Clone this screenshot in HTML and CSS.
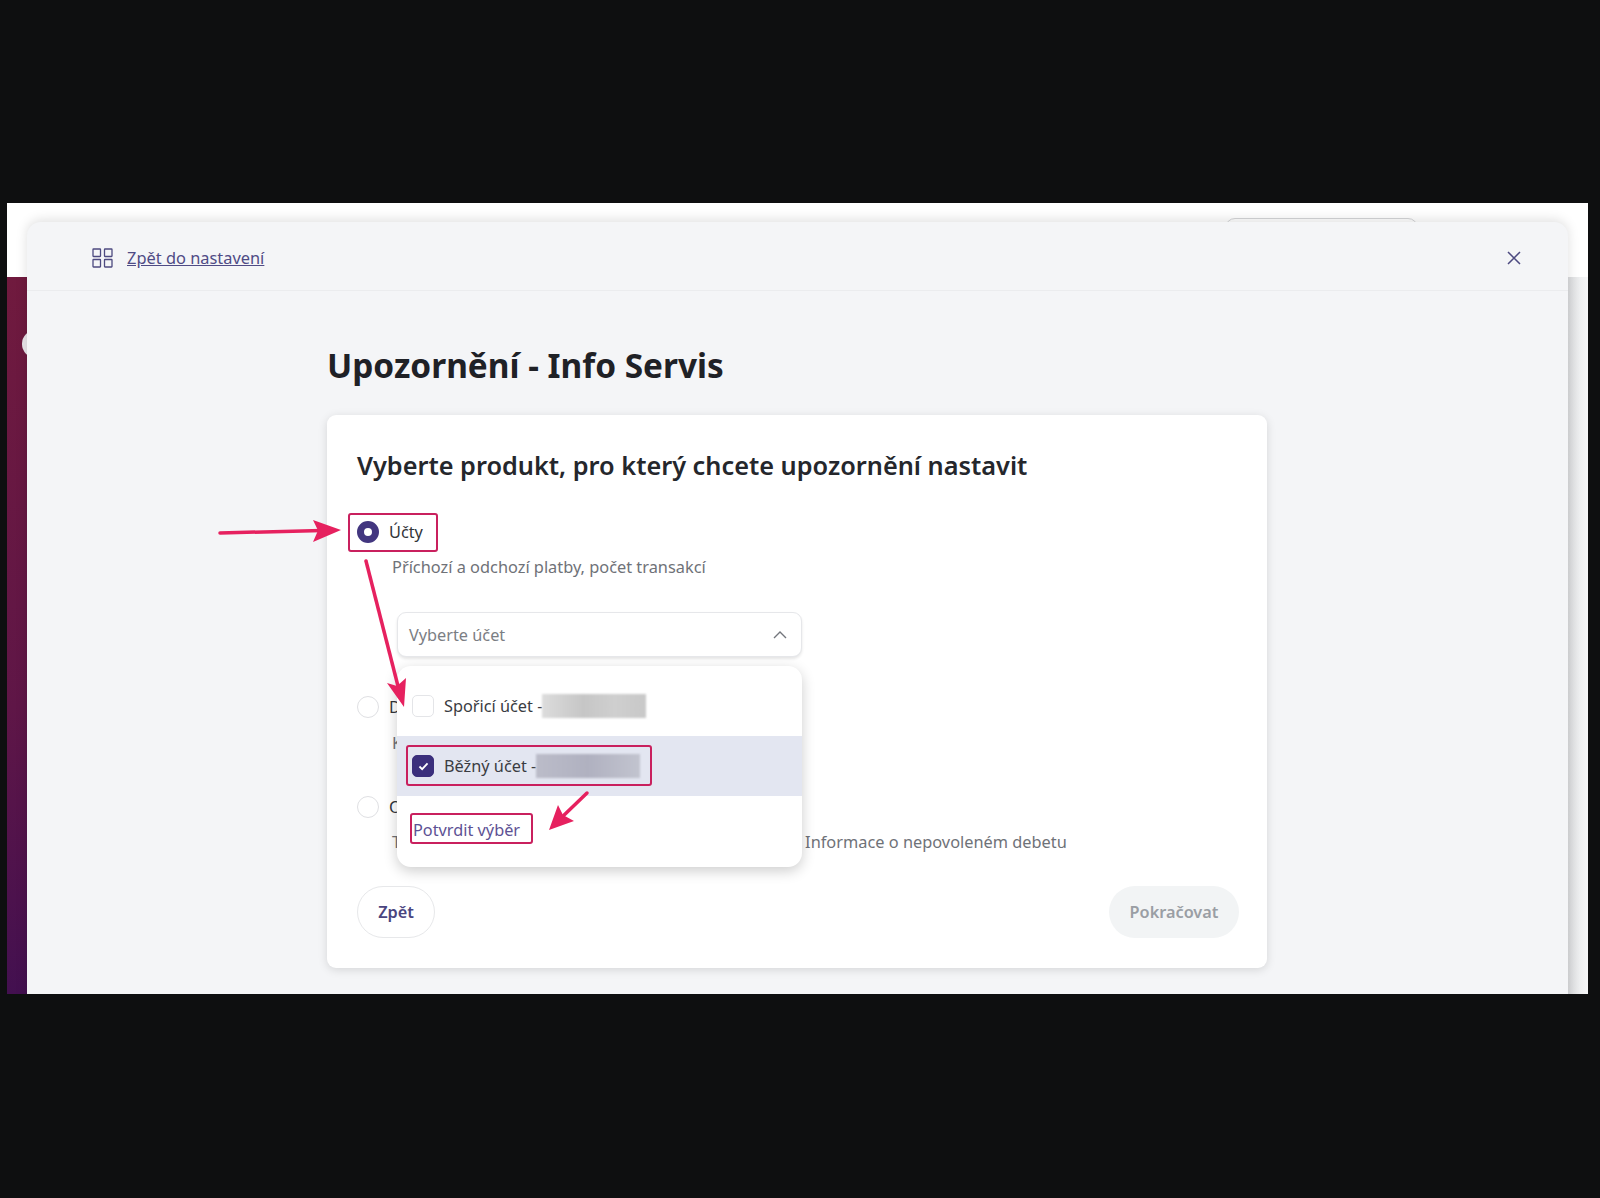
FILE: index.html
```html
<!DOCTYPE html>
<html lang="cs">
<head>
<meta charset="utf-8">
<title>Upozornění - Info Servis</title>
<link rel="stylesheet" href="styles.css">
</head>
<body>
<div class="frame">
  <div class="backdrop">
    <div class="band"></div>
    <div class="strip-left"></div>
    <div class="strip-mid"></div>
    <div class="strip-right"></div>
  </div>
  <div class="back-pill"></div>
  <div class="back-dot"></div>
  <section class="modal">
    <header class="modal-head">
      <svg class="grid-icon" viewBox="0 0 21 20" fill="none" stroke="#4d4a80" stroke-width="1.3">
        <rect x="1" y="1" width="7.5" height="7.5" rx=".5"/><rect x="12.5" y="1" width="7.5" height="7.5" rx=".5"/>
        <rect x="1" y="11.5" width="7.5" height="7.5" rx=".5"/><rect x="12.5" y="11.5" width="7.5" height="7.5" rx=".5"/>
      </svg>
      <a class="back-link" href="#">Zpět do nastavení</a>
      <svg class="close-icon" viewBox="0 0 14 14" fill="none" stroke="#4d4a80" stroke-width="1.5"><path d="M1 1l12 12M13 1L1 13"/></svg>
    </header>
    <main class="modal-body">
      <h1 class="title">Upozornění - Info Servis</h1>
      <div class="card">
        <h2 class="card-title">Vyberte produkt, pro který chcete upozornění nastavit</h2>
        <div class="option option-first"><span class="radio radio-on"></span><span class="opt-label">Účty</span></div>
        <p class="sub">Příchozí a odchozí platby, počet transakcí</p>
        <div class="select">
          <span class="placeholder">Vyberte účet</span>
          <svg class="chevron" viewBox="0 0 14 8" fill="none" stroke="#73767c" stroke-width="1.4"><path d="M1 7l6-6 6 6"/></svg>
          <div class="dropdown">
            <div class="row row-first"><span class="check"></span><span class="row-text">Spořicí účet -</span><span class="mask mask-grey"></span></div>
            <div class="row row-active"><span class="check check-on"><svg viewBox="0 0 12 10" fill="none" stroke="#fff" stroke-width="2"><path d="M1.5 5l3 3 6-6.5"/></svg></span><span class="row-text">Běžný účet -</span><span class="mask mask-blue"></span></div>
            <div class="confirm"><a class="confirm-link" href="#">Potvrdit výběr</a></div>
          </div>
        </div>
        <div class="option option-second"><span class="radio"></span><span class="opt-label">D</span></div>
        <p class="sub sub-second">K</p>
        <div class="option option-third"><span class="radio"></span><span class="opt-label">O</span></div>
        <p class="sub">T<span class="sub-tail">Informace o nepovoleném debetu</span></p>
        <div class="actions">
          <button class="btn btn-back">Zpět</button>
          <button class="btn btn-next">Pokračovat</button>
        </div>
      </div>
    </main>
  </section>
</div>
<svg class="notes" viewBox="0 0 1600 1198" fill="none">
  <g stroke="#c9205e" stroke-width="2">
    <rect x="349" y="514" width="88" height="37" rx="2"/>
    <rect x="407" y="746" width="244" height="39" rx="2"/>
    <rect x="411" y="814" width="121" height="29" rx="2"/>
  </g>
  <g stroke="#e6215f" stroke-width="3.5" stroke-linecap="round">
    <path d="M220 533L322 530.5"/>
    <path d="M366 561L399 690"/>
    <path d="M587 793L560 819"/>
  </g>
  <g fill="#e6215f">
    <path d="M341 530L313 520L318 530.5L313 542Z"/>
    <path d="M404 707L387 683L397 686L406 678Z"/>
    <path d="M549 830L558 805L563 815L574 821Z"/>
  </g>
</svg>
</body>
</html>
```
FILE: styles.css
```css
* { box-sizing: border-box; }
html, body { margin: 0; height: 1198px; overflow: hidden; }
body {
  position: relative;
  background: #0e0f10;
  padding: 203px 12px 0 7px;
  font-family: "Noto Sans", "Open Sans", sans-serif;
  color: #2b2d33;
}
.frame { position: relative; width: 1581px; height: 791px; overflow: hidden; background: #fff; }
.backdrop {
  display: grid;
  grid-template-columns: 20px 1fr 20px;
  grid-template-rows: 74px 1fr;
  height: 100%;
}
.band { grid-column: 1 / 4; background: #fff; }
.strip-left { background: linear-gradient(180deg, #701a3e 0%, #5f1647 60%, #431050 100%); }
.strip-mid { background: #f4f5f7; }
.strip-right { background: linear-gradient(90deg, #d9dadc, #eeeff0 60%, #f6f6f7); }
.back-pill {
  position: absolute; left: 1218px; top: 15px; width: 193px; height: 12px;
  border: 1px solid #d4d5d7; border-radius: 10px 10px 0 0; background: #fff;
}
.back-dot {
  position: absolute; left: 15px; top: 127px; width: 28px; height: 28px;
  border-radius: 50%; background: #e9e6ea;
}
.modal {
  position: absolute; left: 20px; top: 19px; width: 1541px; height: 790px;
  background: #f4f5f7; border-radius: 14px 14px 0 0;
  box-shadow: 0 -2px 12px rgba(0, 0, 0, .13);
}
.modal-head {
  display: flex; align-items: center; height: 69px; padding: 3px 47px 0 65px;
  border-bottom: 1px solid #ebecee;
}
.grid-icon { width: 21px; height: 20px; flex: none; }
.back-link { margin-left: 14px; font-size: 16.4px; color: #4f4b85; text-decoration: underline; }
.close-icon { width: 14px; height: 14px; margin-left: auto; }
.modal-body { width: 940px; margin-left: 300px; }
.title { margin: 52px 0 0; font-size: 33.4px; line-height: 44px; font-weight: 700; color: #1f2126; }
.card {
  margin-top: 28px; padding: 34px 28px 30px 30px; height: 553px;
  background: #fff; border-radius: 9px;
  box-shadow: 0 2px 10px rgba(0, 0, 0, .13);
}
.card-title { margin: 0; font-size: 25.3px; line-height: 32px; font-weight: 600; color: #25272c; }
.option { display: flex; align-items: center; gap: 10px; height: 22px; }
.option-first { margin-top: 40px; }
.option-second { margin-top: 39px; }
.option-third { margin-top: 42px; }
.radio { width: 22px; height: 22px; border-radius: 50%; border: 1px solid #dfe0e3; background: #fff; flex: none; }
.radio-on { border: 7px solid #42367f; }
.opt-label { font-size: 16.3px; line-height: 22px; color: #33353a; }
.sub { margin: 13px 0 0 35px; font-size: 16.35px; line-height: 22px; color: #6f7278; white-space: nowrap; }
.sub-second { margin-top: 14px; }
.sub-tail { margin-left: 404px; }
.select {
  position: relative; display: flex; align-items: center; justify-content: space-between;
  width: 405px; height: 45px; margin: 34px 0 0 40px; padding: 0 14px 0 11px;
  border: 1px solid #e6e7ea; border-radius: 9px; background: #fff;
  box-shadow: 0 2px 3px rgba(0, 0, 0, .1);
}
.placeholder { font-size: 16.3px; color: #7b7e84; }
.chevron { width: 14px; height: 8px; }
.dropdown {
  position: absolute; left: -1px; top: 53px; z-index: 2; width: 405px; height: 201px;
  background: #fff; border-radius: 14px; overflow: hidden;
  box-shadow: 0 4px 14px rgba(0, 0, 0, .2);
}
.row { display: flex; align-items: center; padding-left: 15px; }
.row-first { height: 70px; padding-top: 10px; }
.row-active { height: 60px; background: #e3e6f1; }
.check { display: flex; align-items: center; justify-content: center; width: 22px; height: 22px; flex: none; border: 1px solid #e4e5e8; border-radius: 5px; background: #fff; }
.check-on { background: #3b2f7c; border-color: #3b2f7c; }
.check-on svg { width: 11px; height: 9px; }
.row-text { margin-left: 10px; font-size: 16.3px; color: #3a3c42; white-space: nowrap; }
.mask { height: 24px; filter: blur(1px); }
.mask-grey { width: 104px; margin-left: 0; background: linear-gradient(90deg, #dcdcdc, #c6c6c6 40%, #cfcfcf 70%, #c8c8c8); }
.mask-blue { width: 104px; margin-left: 0; background: linear-gradient(90deg, #bbbcc9, #b0b1c0 50%, #c2c4cf); }
.confirm { padding: 23px 0 0 16px; }
.confirm-link { font-size: 16.3px; line-height: 22px; color: #5d5194; text-decoration: none; display: block; }
.actions { display: flex; justify-content: space-between; margin-top: 33px; }
.btn { height: 52px; border-radius: 26px; font: 600 16.3px "Noto Sans", sans-serif; }
.btn-back { width: 78px; background: #fff; border: 1px solid #e7e8ea; color: #4a4580; padding: 0; }
.btn-next { width: 130px; background: #f2f4f5; border: 0; color: #9a9ea4; padding: 0; }
.notes { position: absolute; left: 0; top: 0; z-index: 5; width: 1600px; height: 1198px; pointer-events: none; }
```
